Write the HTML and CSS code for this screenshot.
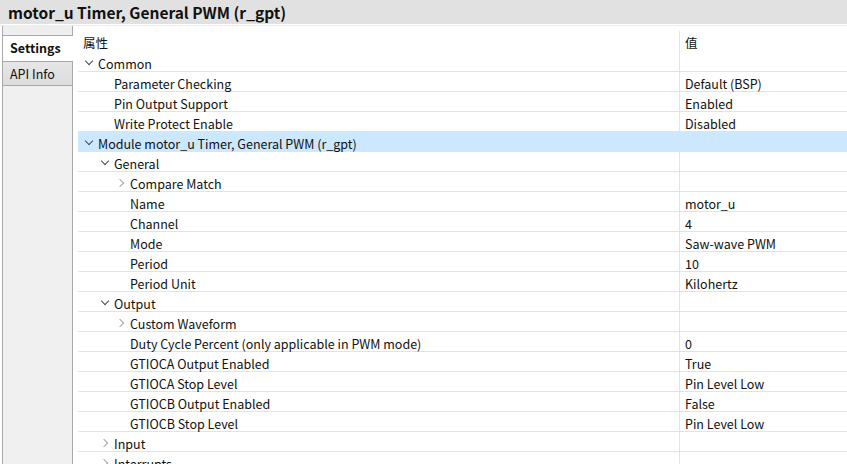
FILE: index.html
```html
<!DOCTYPE html>
<html>
<head>
<meta charset="utf-8">
<link rel="stylesheet" href="styles.css">
</head>
<body>
<div class="titlebar">motor_u Timer, General PWM (r_gpt)</div>
<div class="titlesep"></div>
<div class="main">
  <div class="tabs">
    <div class="tabtop"></div>
    <div class="tab active">Settings</div>
    <div class="tab">API Info</div>
  </div>
  <div class="table">
    <div class="hdr">
      <div class="hcell">属性</div>
      <div class="hcell val">值</div>
    </div>
    <div class="row"><div class="cell l0"><span class="arr down"></span>Common</div><div class="cell val"></div></div>
    <div class="row"><div class="cell l1"><span class="arr"></span>Parameter Checking</div><div class="cell val">Default (BSP)</div></div>
    <div class="row"><div class="cell l1"><span class="arr"></span>Pin Output Support</div><div class="cell val">Enabled</div></div>
    <div class="row"><div class="cell l1"><span class="arr"></span>Write Protect Enable</div><div class="cell val">Disabled</div></div>
    <div class="row sel"><div class="cell l0"><span class="arr down"></span>Module motor_u Timer, General PWM (r_gpt)</div><div class="cell val"></div></div>
    <div class="row"><div class="cell l1"><span class="arr down"></span>General</div><div class="cell val"></div></div>
    <div class="row"><div class="cell l2"><span class="arr right"></span>Compare Match</div><div class="cell val"></div></div>
    <div class="row"><div class="cell l2"><span class="arr"></span>Name</div><div class="cell val">motor_u</div></div>
    <div class="row"><div class="cell l2"><span class="arr"></span>Channel</div><div class="cell val">4</div></div>
    <div class="row"><div class="cell l2"><span class="arr"></span>Mode</div><div class="cell val">Saw-wave PWM</div></div>
    <div class="row"><div class="cell l2"><span class="arr"></span>Period</div><div class="cell val">10</div></div>
    <div class="row"><div class="cell l2"><span class="arr"></span>Period Unit</div><div class="cell val">Kilohertz</div></div>
    <div class="row"><div class="cell l1"><span class="arr down"></span>Output</div><div class="cell val"></div></div>
    <div class="row"><div class="cell l2"><span class="arr right"></span>Custom Waveform</div><div class="cell val"></div></div>
    <div class="row"><div class="cell l2"><span class="arr"></span>Duty Cycle Percent (only applicable in PWM mode)</div><div class="cell val">0</div></div>
    <div class="row"><div class="cell l2"><span class="arr"></span>GTIOCA Output Enabled</div><div class="cell val">True</div></div>
    <div class="row"><div class="cell l2"><span class="arr"></span>GTIOCA Stop Level</div><div class="cell val">Pin Level Low</div></div>
    <div class="row"><div class="cell l2"><span class="arr"></span>GTIOCB Output Enabled</div><div class="cell val">False</div></div>
    <div class="row"><div class="cell l2"><span class="arr"></span>GTIOCB Stop Level</div><div class="cell val">Pin Level Low</div></div>
    <div class="row"><div class="cell l1"><span class="arr right"></span>Input</div><div class="cell val"></div></div>
    <div class="row"><div class="cell l1"><span class="arr right"></span>Interrupts</div><div class="cell val"></div></div>
  </div>
</div>
</body>
</html>
```
FILE: styles.css
```css
html, body {
  margin: 0;
  padding: 0;
  width: 847px;
  height: 464px;
  overflow: hidden;
  background: #ffffff;
  font-family: "Noto Sans CJK SC", "Noto Sans", sans-serif;
  font-size: 12.5px;
  color: #111111;
}
.titlebar {
  height: 24px;
  background: #e1e1e1;
  font-weight: bold;
  font-size: 15.5px;
  line-height: 24px;
  padding-left: 8px;
  color: #111;
  box-sizing: border-box;
}
.titlesep {
  height: 2px;
  border-top: 1px solid #ffffff;
  background: #ececec;
  box-sizing: border-box;
}
.main {
  display: flex;
  height: 438px;
}
.tabs {
  width: 69px;
  margin-left: 2px;
  border-left: 1px solid #a9a9a9;
  border-right: 1px solid #a9a9a9;
  background: #f0f0f0;
  display: flex;
  flex-direction: column;
}
.tabtop {
  height: 9px;
  border-bottom: 1px solid #a9a9a9;
  background: #eeeeee;
}
.tab {
  height: 23px;
  line-height: 23px;
  padding-left: 7px;
  font-size: 12.5px;
  background: linear-gradient(#e6e6e6, #dcdcdc);
  border-top: 1px solid #a9a9a9;
  border-bottom: 1px solid #a9a9a9;
}
.tab.active {
  background: #ffffff;
  font-weight: bold;
  border-top: none;
  border-bottom: none;
  margin-right: -1px;
  height: 25px;
  line-height: 24px;
}
.table {
  flex: 1;
  margin-left: 5px;
  display: flex;
  flex-direction: column;
}
.hdr {
  display: grid;
  grid-template-columns: 601px 1fr;
  height: 29px;
}
.hcell {
  padding-left: 5px;
  padding-top: 7px;
}
.hcell.val {
  border-left: 1px solid #e3e3e3;
  margin-top: 5px;
  padding-top: 2px;
}
.row {
  display: grid;
  grid-template-columns: 601px 1fr;
  height: 20px;
  border-bottom: 1px solid #e3e3e3;
  box-sizing: border-box;
  flex: none;
}
.row.sel {
  background: #cce8ff;
}
.cell {
  display: flex;
  align-items: flex-start;
  white-space: nowrap;
  line-height: 19px;
  height: 19px;
  padding-top: 2px;
  box-sizing: border-box;
}
.cell.val {
  border-left: 1px solid #e3e3e3;
  padding-left: 5px;
}
.l0 { padding-left: 4px; }
.l1 { padding-left: 20px; }
.l2 { padding-left: 36px; }
.arr {
  width: 16px;
  height: 16px;
  flex: none;
  position: relative;
}
.arr.down::before {
  content: "";
  position: absolute;
  left: 4px;
  top: 4px;
  width: 5px;
  height: 5px;
  border-right: 1.5px solid #4a4a4a;
  border-bottom: 1.5px solid #4a4a4a;
  transform: rotate(45deg);
}
.arr.right::before {
  content: "";
  position: absolute;
  left: 3px;
  top: 6px;
  width: 5px;
  height: 5px;
  border-right: 1.5px solid #a6a6a6;
  border-bottom: 1.5px solid #a6a6a6;
  transform: rotate(-45deg);
}
```
